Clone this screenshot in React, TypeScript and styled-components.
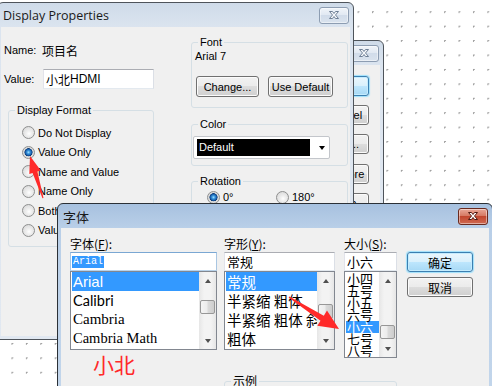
import React from "react";
import styled, { createGlobalStyle } from "styled-components";

const ui = `"Liberation Sans", Arial, "Noto Sans CJK SC", sans-serif`;
const cjk = `"Noto Sans CJK SC", "Noto Sans", sans-serif`;

const GlobalStyle = createGlobalStyle`
  html, body { margin: 0; padding: 0; }
  body {
    background-color: #fff;
    background-image: radial-gradient(circle at 1.5px 1.5px, #9c9c9c 0.9px, transparent 1px);
    background-size: 14.43px 14.43px;
    background-position: 10.5px 10.3px;
    font-family: ${ui};
    font-size: 11px;
    color: #000;
  }
`;

const Desktop = styled.div`
  position: relative;
  width: 492px;
  height: 386px;
  overflow: hidden;
`;

/* ---------- window chrome ---------- */

const Frame = styled.section<{ $x: number; $y: number; $w: number; $h: number; $active?: boolean }>`
  position: absolute;
  left: ${(p) => p.$x}px;
  top: ${(p) => p.$y}px;
  width: ${(p) => p.$w}px;
  height: ${(p) => p.$h}px;
  box-sizing: border-box;
  display: flex;
  flex-direction: column;
  padding: 0 3px 3px;
  border: 1px solid ${(p) => (p.$active ? "#2b3036" : "#4e545b")};
  border-radius: 6px 6px 0 0;
  background: ${(p) =>
    p.$active
      ? "linear-gradient(#a7c1df, #b9cfe8 24px, #c3d6eb)"
      : "linear-gradient(#cfdbe9, #dbe4ef 24px, #e1e8f1)"};
`;

const TitleBar = styled.header`
  flex: none;
  height: 24px;
  display: flex;
  align-items: center;
  justify-content: space-between;
  padding: 0 1px 0 2px;
`;

const Caption = styled.span<{ $cjk?: boolean }>`
  font-family: ${(p) => (p.$cjk ? cjk : `"Open Sans", "Noto Sans", sans-serif`)};
  font-size: ${(p) => (p.$cjk ? 13 : 12.5)}px;
  color: #1a1a1a;
  white-space: nowrap;
`;

const CloseButton = styled.span<{ $active?: boolean }>`
  width: 30px;
  height: 17px;
  box-sizing: border-box;
  display: flex;
  align-items: center;
  justify-content: center;
  border: 1px solid ${(p) => (p.$active ? "#6a2a1f" : "#8d9db2")};
  border-radius: 3px;
  background: ${(p) =>
    p.$active
      ? "linear-gradient(#e9a898, #d67a64 45%, #c2472f 50%, #cf6a52)"
      : "linear-gradient(#f0f4f9, #e0e8f2 50%, #d1dcea 50%, #dae3ee)"};
  box-shadow: inset 0 0 0 1px rgba(255, 255, 255, 0.45);
`;

const CloseGlyph = ({ active }: { active?: boolean }) => (
  <svg width="14" height="10" viewBox="0 0 14 10">
    <path
      d="M2.5 1.5h3l1.5 2 1.5-2h3l-3 3.5 3 3.5h-3l-1.5-2-1.5 2h-3l3-3.5z"
      fill={active ? "#ffffff" : "#f6f8fb"}
      stroke={active ? "#52190f" : "#6f8096"}
      strokeWidth="1"
      strokeLinejoin="round"
    />
  </svg>
);

type WindowProps = {
  x: number;
  y: number;
  w: number;
  h: number;
  title?: string;
  active?: boolean;
  cjk?: boolean;
  children: React.ReactNode;
};

function Window({ x, y, w, h, title, active, cjk, children }: WindowProps) {
  return (
    <Frame $x={x} $y={y} $w={w} $h={h} $active={active}>
      <TitleBar>
        <Caption $cjk={cjk}>{title}</Caption>
        <CloseButton $active={active}>
          <CloseGlyph active={active} />
        </CloseButton>
      </TitleBar>
      {children}
    </Frame>
  );
}

const Client = styled.div`
  flex: 1;
  min-height: 0;
  background: #f0f0f0;
  overflow: hidden;
`;

/* ---------- shared controls ---------- */

const PushButton = styled.button<{ $w: number; $h: number; $default?: boolean; $cjk?: boolean }>`
  flex: none;
  box-sizing: border-box;
  width: ${(p) => p.$w}px;
  height: ${(p) => p.$h}px;
  margin: 0;
  padding: 0;
  display: flex;
  align-items: center;
  justify-content: center;
  white-space: nowrap;
  overflow: hidden;
  border: 1px solid ${(p) => (p.$default ? "#3c7fb1" : "#707070")};
  border-radius: 3px;
  background: ${(p) =>
    p.$default
      ? "linear-gradient(#eaf6fd, #d9f0fc 50%, #bee6fd 50%, #a7d9f5)"
      : "linear-gradient(#f2f2f2, #ebebeb 50%, #dddddd 50%, #cfcfcf)"};
  box-shadow: ${(p) =>
    p.$default ? "inset 0 0 0 1px #c4ecfe, 0 0 1px 1px #9ee0fb" : "inset 0 0 0 1px #fbfbfb"};
  font-family: ${(p) => (p.$cjk ? cjk : ui)};
  font-size: ${(p) => (p.$cjk ? 12 : 11)}px;
  color: #000;
`;

const TextBox = styled.div<{ $w?: number; $h: number; $focus?: boolean; $cjk?: boolean }>`
  box-sizing: border-box;
  width: ${(p) => (p.$w ? `${p.$w}px` : "100%")};
  height: ${(p) => p.$h}px;
  display: flex;
  align-items: center;
  padding-left: ${(p) => (p.$focus ? 1 : 2)}px;
  border: 1px solid;
  border-color: ${(p) => (p.$focus ? "#7aa7d3 #a9c6e2 #b8d2ea #a9c6e2" : "#abadb3 #dbdfe6 #e3e9ef #e2e3ea")};
  background: #fff;
  font-family: ${(p) => (p.$cjk ? cjk : ui)};
  font-size: ${(p) => (p.$cjk ? 13 : 12)}px;
  white-space: nowrap;
`;

const Selected = styled.span`
  background: #3399ff;
  color: #fff;
  font-family: "Liberation Mono", monospace;
  font-size: 10px;
  line-height: 12px;
  padding: 0 1px;
`;

const GroupBox = styled.fieldset<{ $w?: number }>`
  margin: 0;
  padding: 0;
  min-width: 0;
  box-sizing: border-box;
  width: ${(p) => (p.$w ? `${p.$w}px` : "auto")};
  border: 1px solid #d5dfe5;
  border-radius: 3px;
`;

const Legend = styled.legend<{ $cjk?: boolean }>`
  margin-left: 6px;
  padding: 0 2px;
  line-height: 14px;
  font-family: ${(p) => (p.$cjk ? cjk : ui)};
  font-size: ${(p) => (p.$cjk ? 12 : 11)}px;
`;

const Radio = styled.span<{ $on?: boolean }>`
  flex: none;
  width: 13px;
  height: 13px;
  box-sizing: border-box;
  border-radius: 50%;
  border: 1px solid #8e8f8f;
  background: ${(p) =>
    p.$on
      ? "radial-gradient(circle at 50% 48%, #a6e0ff 0, #3d9be0 1.5px, #165aa7 3.1px, #0f3d77 3.8px, #d6d6d6 4.3px, #f3f3f3 100%)"
      : "radial-gradient(circle at 55% 60%, #ffffff 0, #efefef 30%, #d2d2d2 100%)"};
`;

const Option = styled.label<{ $h: number; $w?: number }>`
  display: flex;
  align-items: center;
  gap: 3px;
  height: ${(p) => p.$h}px;
  width: ${(p) => (p.$w ? `${p.$w}px` : "auto")};
  white-space: nowrap;
`;

/* ---------- Display Properties ---------- */

const PropsBody = styled(Client)`
  display: flex;
  align-items: flex-start;
  padding-left: 3px;
`;

const LeftCol = styled.div`
  width: 150px;
  flex: none;
  display: flex;
  flex-direction: column;
  padding-top: 16px;
`;

const FieldRow = styled.div<{ $h: number; $mt?: number }>`
  display: flex;
  align-items: center;
  height: ${(p) => p.$h}px;
  margin-top: ${(p) => p.$mt ?? 0}px;
`;

const FieldLabel = styled.span<{ $w: number }>`
  flex: none;
  width: ${(p) => p.$w}px;
`;

const CjkText = styled.span`
  font-family: ${cjk};
  font-size: 12px;
`;

const FormatGroup = styled(GroupBox)`
  margin: 14px 0 0 4px;
`;

const RadioColumn = styled.div`
  display: flex;
  flex-direction: column;
  padding: 6px 0 6px 13px;
`;

const RightCol = styled.div`
  width: 157px;
  flex: none;
  margin-left: 37px;
  padding-top: 8px;
  display: flex;
  flex-direction: column;
`;

const FontName = styled.div`
  padding-left: 3px;
  line-height: 14px;
`;

const ButtonRow = styled.div`
  display: flex;
  gap: 9px;
  padding: 13px 0 10px 4px;
`;

const Spaced = styled(GroupBox)<{ $mt: number }>`
  margin-top: ${(p) => p.$mt}px;
`;

const Combo = styled.div`
  margin: 5px 0 6px 1px;
  width: 137px;
  height: 23px;
  box-sizing: border-box;
  display: flex;
  align-items: center;
  padding-left: 3px;
  border: 1px solid #c3c6cb;
  border-radius: 2px;
  background: #fff;
`;

const ComboValue = styled.span`
  width: 113px;
  height: 17px;
  box-sizing: border-box;
  padding-left: 2px;
  line-height: 17px;
  background: #000;
  color: #fff;
`;

const ComboArrow = styled.span`
  flex: 1;
  display: flex;
  justify-content: center;
  padding-left: 4px;
  &::before {
    content: "";
    border-left: 3.5px solid transparent;
    border-right: 3.5px solid transparent;
    border-top: 4px solid #000;
  }
`;

const RotationRow = styled.div`
  display: flex;
  padding: 0 0 14px 15px;
`;

/* ---------- window behind ---------- */

const SideBody = styled(Client)`
  display: flex;
  flex-direction: column;
  align-items: flex-end;
  gap: 9.2px;
  padding: 11px 11px 0 0;
`;

/* ---------- 字体 ---------- */

const FontBody = styled(Client)`
  display: flex;
  align-items: flex-start;
  padding: 9px 0 0 9px;
  font-family: ${cjk};
  font-size: 12px;
`;

const Column = styled.div<{ $w: number; $ml?: number; $pt?: number }>`
  flex: none;
  width: ${(p) => p.$w}px;
  margin-left: ${(p) => p.$ml ?? 0}px;
  padding-top: ${(p) => p.$pt ?? 0}px;
  display: flex;
  flex-direction: column;
  gap: ${(p) => (p.$pt ? 5 : 0)}px;
`;

const ColLabel = styled.div`
  height: 14px;
  line-height: 14px;
  margin-bottom: 1px;
  white-space: nowrap;
  u {
    text-decoration: underline;
  }
`;

const ListBox = styled.div<{ $h: number }>`
  box-sizing: border-box;
  height: ${(p) => p.$h}px;
  display: flex;
  padding-left: 1px;
  border: 1px solid #828790;
  background: #fff;
`;

const Items = styled.div<{ $pt?: number }>`
  flex: 1;
  min-width: 0;
  overflow: hidden;
  padding-top: ${(p) => p.$pt ?? 0}px;
`;

const Item = styled.div<{ $h: number; $size: number; $font?: string; $sel?: boolean }>`
  height: ${(p) => p.$h}px;
  line-height: ${(p) => p.$h}px;
  padding-left: 1px;
  white-space: nowrap;
  font-family: ${(p) => p.$font ?? cjk};
  font-size: ${(p) => p.$size}px;
  background: ${(p) => (p.$sel ? "#3399ff" : "transparent")};
  color: ${(p) => (p.$sel ? "#fff" : "#000")};
`;

const Scrollbar = styled.div`
  flex: none;
  width: 17px;
  display: flex;
  flex-direction: column;
  align-items: center;
  background: linear-gradient(90deg, #e6e6e6, #f3f3f3 30%, #f3f3f3 70%, #e6e6e6);
`;

const ScrollArrow = styled.span<{ $down?: boolean }>`
  flex: none;
  height: 17px;
  margin-top: ${(p) => (p.$down ? "auto" : "0")};
  display: flex;
  align-items: center;
  justify-content: center;
  &::before {
    content: "";
    border-left: 3.5px solid transparent;
    border-right: 3.5px solid transparent;
    ${(p) => (p.$down ? "border-top" : "border-bottom")}: 4px solid #505050;
  }
`;

const Thumb = styled.span<{ $top: number; $h: number }>`
  flex: none;
  margin-top: ${(p) => p.$top}px;
  width: 15px;
  height: ${(p) => p.$h}px;
  box-sizing: border-box;
  border: 1px solid #979797;
  border-radius: 2px;
  background: linear-gradient(90deg, #f4f4f4, #ececec 45%, #dadada 55%, #cdcdcd);
`;

const Note = styled.div`
  margin: 3px 0 0 23px;
  font-size: 21px;
  line-height: 22px;
  color: #ff2a2a;
`;

const RightSection = styled.div`
  margin-left: 7px;
  display: flex;
  flex-direction: column;
`;

const TopRow = styled.div`
  display: flex;
  align-items: flex-start;
`;

const SampleGroup = styled(GroupBox)`
  margin-top: 16px;
  height: 40px;
`;

const Annotations = styled.svg`
  position: absolute;
  left: 0;
  top: 0;
  width: 492px;
  height: 386px;
  pointer-events: none;
`;

type Scroll = { top: number; h: number };

function ListScroll({ top, h }: Scroll) {
  return (
    <Scrollbar>
      <ScrollArrow />
      <Thumb $top={top} $h={h} />
      <ScrollArrow $down />
    </Scrollbar>
  );
}

const faces = [
  { name: "Arial", font: `"Liberation Sans", Arial, sans-serif`, size: 15 },
  { name: "Calibri", font: `Lato, "Liberation Sans", sans-serif`, size: 14.5 },
  { name: "Cambria", font: `"Liberation Serif", serif`, size: 15 },
  { name: "Cambria Math", font: `"Liberation Serif", serif`, size: 14.5 },
];

const styles = ["常规", "半紧缩 粗体", "半紧缩 粗体 斜体", "粗体"];
const sizes = ["小四", "五号", "小五", "六号", "小六", "七号", "八号"];
const formats = ["Do Not Display", "Value Only", "Name and Value", "Name Only", "Both", "Value Only If"];
const sideButtons = ["OK", "Cancel", "Edit...", "Restore", "Help"];

export default function App() {
  return (
    <Desktop>
      <GlobalStyle />

      <Window x={250} y={40} w={134} h={200}>
        <SideBody>
          {sideButtons.map((b, i) => (
            <PushButton key={b} $w={48} $h={20} $default={i === 0}>
              {b}
            </PushButton>
          ))}
        </SideBody>
      </Window>

      <Window x={-3} y={2} w={357} h={338} title="Display Properties">
        <PropsBody>
          <LeftCol>
            <FieldRow $h={14}>
              <FieldLabel $w={38}>Name:</FieldLabel>
              <CjkText>项目名</CjkText>
            </FieldRow>
            <FieldRow $h={20} $mt={12}>
              <FieldLabel $w={39}>Value:</FieldLabel>
              <TextBox $w={127} $h={20}>
                <CjkText>小北</CjkText>HDMI
              </TextBox>
            </FieldRow>
            <FormatGroup $w={146}>
              <Legend>Display Format</Legend>
              <RadioColumn>
                {formats.map((f, i) => (
                  <Option key={f} $h={19.5}>
                    <Radio $on={i === 1} />
                    {f}
                  </Option>
                ))}
              </RadioColumn>
            </FormatGroup>
          </LeftCol>

          <RightCol>
            <GroupBox>
              <Legend>Font</Legend>
              <FontName>Arial 7</FontName>
              <ButtonRow>
                <PushButton $w={63} $h={21}>Change...</PushButton>
                <PushButton $w={65} $h={21}>Use Default</PushButton>
              </ButtonRow>
            </GroupBox>
            <Spaced $mt={9}>
              <Legend>Color</Legend>
              <Combo>
                <ComboValue>Default</ComboValue>
                <ComboArrow />
              </Combo>
            </Spaced>
            <Spaced $mt={8}>
              <Legend>Rotation</Legend>
              <RotationRow>
                <Option $h={18} $w={69}>
                  <Radio $on />
                  0°
                </Option>
                <Option $h={18}>
                  <Radio />
                  180°
                </Option>
              </RotationRow>
            </Spaced>
          </RightCol>
        </PropsBody>
      </Window>

      <Window x={57} y={203} w={436} h={200} title="字体" active cjk>
        <FontBody>
          <Column $w={147}>
            <ColLabel>
              字体(<u>F</u>):
            </ColLabel>
            <TextBox $h={19} $focus>
              <Selected>Arial</Selected>
            </TextBox>
            <ListBox $h={79}>
              <Items>
                {faces.map((f, i) => (
                  <Item key={f.name} $h={19} $size={f.size} $font={f.font} $sel={i === 0}>
                    {f.name}
                  </Item>
                ))}
              </Items>
              <ListScroll top={11} h={14} />
            </ListBox>
            <Note>小北</Note>
          </Column>

          <RightSection>
            <TopRow>
              <Column $w={111}>
                <ColLabel>
                  字形(<u>Y</u>):
                </ColLabel>
                <TextBox $h={19} $cjk>
                  常规
                </TextBox>
                <ListBox $h={79}>
                  <Items>
                    {styles.map((s, i) => (
                      <Item key={s} $h={19} $size={14.5} $sel={i === 0}>
                        {s}
                      </Item>
                    ))}
                  </Items>
                  <ListScroll top={15} h={15} />
                </ListBox>
              </Column>

              <Column $w={53} $ml={9}>
                <ColLabel>
                  大小(<u>S</u>):
                </ColLabel>
                <TextBox $h={19} $cjk>
                  小六
                </TextBox>
                <ListBox $h={87}>
                  <Items $pt={1}>
                    {sizes.map((s, i) => (
                      <Item key={s} $h={12} $size={13} $sel={i === 4}>
                        {s}
                      </Item>
                    ))}
                  </Items>
                  <ListScroll top={36} h={14} />
                </ListBox>
              </Column>

              <Column $w={66} $ml={10} $pt={15}>
                <PushButton $w={66} $h={20} $default $cjk>
                  确定
                </PushButton>
                <PushButton $w={66} $h={20} $cjk>
                  取消
                </PushButton>
              </Column>
            </TopRow>
            <SampleGroup $w={173}>
              <Legend $cjk>示例</Legend>
            </SampleGroup>
          </RightSection>
        </FontBody>
      </Window>

      <Annotations viewBox="0 0 492 386">
        <polygon
          points="43.5,197.9 37.4,171.5 40.8,170.5 30,156 29.3,174 32.6,173 42.5,198.2"
          fill="#ff2a2a"
        />
        <polygon
          points="288.6,297.6 320.5,320.8 317.3,325.8 339,329 327,310.6 323.8,315.7 289.4,296.4"
          fill="#ff2a2a"
        />
      </Annotations>
    </Desktop>
  );
}
